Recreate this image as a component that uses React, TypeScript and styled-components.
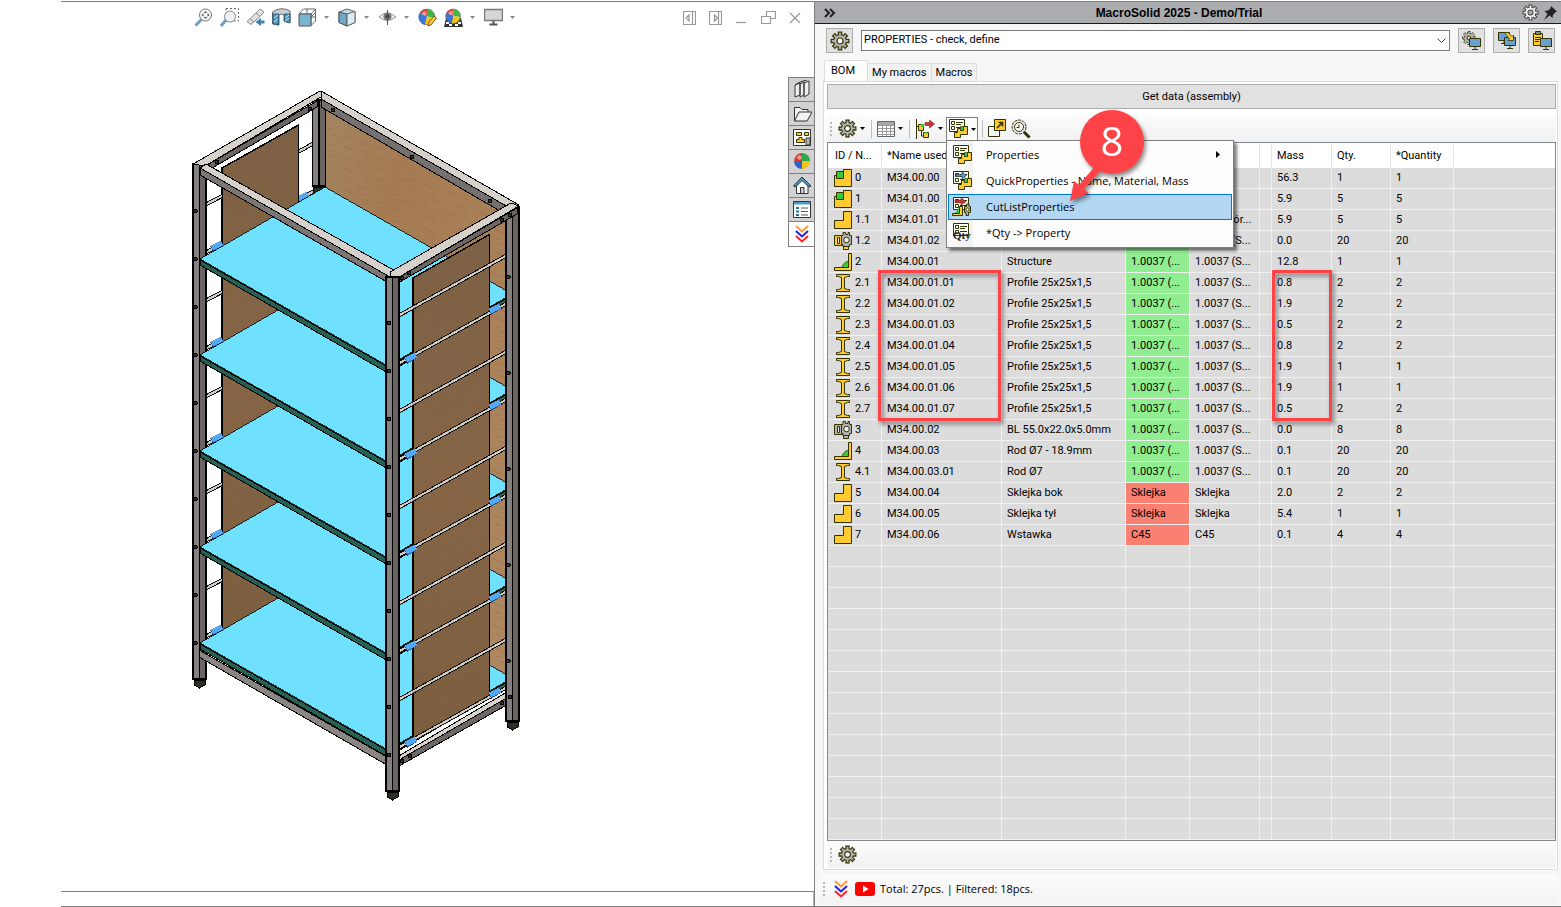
import React from "react";
import styled, { createGlobalStyle, css } from "styled-components";

const GlobalStyle = createGlobalStyle`
  * { box-sizing: border-box; }
  html, body { margin: 0; padding: 0; background: #fff; }
  button, select { font: inherit; color: inherit; margin: 0; padding: 0; }
  svg { display: block; flex: none; }
`;

const uiFont = `"Open Sans", "Segoe UI", sans-serif`;
const gridFont = `Roboto, "Liberation Sans", sans-serif`;
const titleFont = `"Liberation Sans", Arial, sans-serif`;
const INK = "#333300";
const GOLD = "#ffcb31";
const GREEN = "#33cc33";
const GREY = "#b3b3b3";
const BLUE = "#5b9bd5";
const RED = "#cc3333";

/* ---------- layout ---------- */

const Shell = styled.div`
  display: grid;
  grid-template-columns: minmax(0, 1fr) 747px;
  min-height: 100vh;
  background: #fff;
  color: #000;
  font: 11px/16px ${gridFont};
`;

const Viewport = styled.main`
  display: flex;
  flex-direction: column;
  margin: 1px 0 0 61px;
  border-top: 1px solid #808080;
  border-bottom: 1px solid #808080;
`;

const ViewBar = styled.header`
  display: flex;
  justify-content: space-between;
  align-items: center;
  height: 31px;
  padding: 0 12px 0 133px;
`;

const IconRun = styled.div<{ $gap: number }>`
  display: flex;
  align-items: center;
  gap: ${(p) => p.$gap}px;
`;

const CaretSlot = styled.span`
  margin-right: 2px;
`;

const PlainButton = styled.button`
  display: flex;
  align-items: center;
  background: none;
  border: 0;
`;

const Stage = styled.div`
  display: flex;
  flex: 1;
  justify-content: space-between;
  align-items: flex-start;
  padding: 44px 0 0 119px;
`;

const TaskTabs = styled.nav`
  display: flex;
  flex-direction: column;
  width: 26px;
  border: 1px solid #808080;
  border-right: 0;
`;

const TaskTab = styled.button<{ $active?: boolean }>`
  display: flex;
  align-items: center;
  justify-content: center;
  height: 24px;
  border: 0;
  border-bottom: ${(p) => (p.$active ? "0" : "1px solid #808080")};
  background: ${(p) => (p.$active ? "#fff" : "#d2d2d2")};
`;

const ViewFooter = styled.div`
  height: 15px;
  border-top: 1px solid #808080;
  border-right: 1px solid #a0b4b4;
`;

const Panel = styled.aside`
  display: flex;
  flex-direction: column;
  margin-top: 1px;
  border: 1px solid #808080;
  border-right: 0;
  background: #f7f7f7;
`;

const TitleBar = styled.header`
  display: flex;
  align-items: center;
  justify-content: space-between;
  height: 22px;
  padding: 0 4px 0 9px;
  background: #abacb0;
  border-bottom: 1px solid #1a1a1a;
`;

const Title = styled.h1`
  margin: 0;
  font: bold 12px/16px ${titleFont};
`;

const MacroRow = styled.div`
  display: flex;
  align-items: center;
  gap: 8px;
  padding: 4px 6px 0 11px;
`;

const SquareButton = styled.button`
  display: flex;
  align-items: center;
  justify-content: center;
  width: 27px;
  height: 25px;
  border: 1px solid #adadad;
  background: #e1e1e1;
`;

const SelectWrap = styled.div`
  position: relative;
  flex: 1;
  min-width: 0;
  & > svg { position: absolute; right: 4px; top: 8px; pointer-events: none; }
`;

const MacroSelect = styled.select`
  appearance: none;
  display: block;
  width: 100%;
  height: 21px;
  padding: 0 20px 2px 2px;
  border: 1px solid #7a7a7a;
  border-radius: 0;
  background: #fff;
`;

const TabRow = styled.div`
  display: flex;
  align-items: flex-end;
  padding: 7px 0 0 9px;
`;

const TabButton = styled.button<{ $active?: boolean }>`
  height: ${(p) => (p.$active ? 21 : 18)}px;
  padding: 0 ${(p) => (p.$active ? 12 : 4)}px 0 ${(p) => (p.$active ? 6 : 4)}px;
  border: 1px solid #dcdcdc;
  border-bottom: 0;
  background: ${(p) => (p.$active ? "#fff" : "#f2f2f2")};
  & + & { border-left: 0; }
`;

const TabPage = styled.section`
  display: flex;
  flex: 1;
  flex-direction: column;
  margin: 0 3px 0 8px;
  padding: 2px 1px 1px 3px;
  border: 1px solid #dcdcdc;
  background: #fff;
`;

const GetDataButton = styled.button`
  height: 25px;
  border: 1px solid #adadad;
  background: #e1e1e1;
`;

const ToolStrip = styled.div<{ $spaced?: boolean }>`
  display: flex;
  align-items: center;
  height: 27px;
  margin-top: ${(p) => (p.$spaced ? 6 : 0)}px;
  padding-left: 3px;
  border-radius: 3px;
  background: linear-gradient(#fcfcfc, #f1f1f1);
`;

const Grip = styled.span`
  width: 2px;
  height: 14px;
  margin-right: 4px;
  background: repeating-linear-gradient(#b8b8b8 0 2px, transparent 2px 4px);
`;

const Divider = styled.span`
  width: 1px;
  height: 18px;
  margin: 0 3px 0 4px;
  background: #bdbdbd;
`;

const ToolButton = styled.button<{ $open?: boolean }>`
  display: flex;
  align-items: center;
  gap: 3px;
  height: 24px;
  padding: 0 1px;
  border: 1px solid transparent;
  background: none;
  ${(p) =>
    p.$open &&
    css`
      border-color: #808080;
      border-bottom: 0;
      background: #fcfcfc;
    `}
`;

const MenuAnchor = styled.div`
  position: relative;
  display: flex;
  margin-left: 1px;
`;

const Menu = styled.div`
  position: absolute;
  z-index: 3;
  left: 0;
  top: 23px;
  width: 288px;
  padding: 1px;
  border: 1px solid #808080;
  background: linear-gradient(to right, #fcfcfc, #f1f1f1 26px, #fdfdfd 26px);
  box-shadow: 3px 3px 3px rgba(0, 0, 0, 0.5);
`;

const MenuItem = styled.button<{ $hot?: boolean }>`
  display: flex;
  align-items: center;
  gap: 14px;
  width: 100%;
  height: 26px;
  padding: 0 11px 0 3px;
  border: 1px solid ${(p) => (p.$hot ? "#0078d7" : "transparent")};
  background: ${(p) => (p.$hot ? "#b3d7f3" : "none")};
  font: 11px/16px ${uiFont};
  text-align: left;
  & > span { flex: 1; white-space: nowrap; }
`;

const Callout = styled.svg`
  position: absolute;
  z-index: 4;
  left: 114px;
  top: -12px;
  pointer-events: none;
  filter: drop-shadow(2px 3px 2px rgba(0, 0, 0, 0.45));
`;

const GridFrame = styled.div`
  position: relative;
  flex: 1;
  border: 1px solid #828790;
  background: #dcdcdc;
`;

const Grid = styled.table`
  width: 100%;
  table-layout: fixed;
  border-collapse: separate;
  border-spacing: 0;
`;

const HeadCell = styled.th`
  height: 25px;
  padding: 0 5px;
  border-right: 1px solid #e5e5e5;
  background: #fff;
  font-weight: normal;
  text-align: left;
  white-space: nowrap;
  &:first-child { padding-left: 7px; }
  &:last-child { border-right: 0; }
`;

const tones = { ok: "#90ee90", bad: "#fa8072", none: "transparent" };

const Cell = styled.td<{ $tone?: keyof typeof tones }>`
  height: 21px;
  padding: 0 5px;
  border-right: 1px solid #f0f0f0;
  border-bottom: 1px solid #f0f0f0;
  background: ${(p) => tones[p.$tone ?? "none"]};
  overflow: hidden;
  white-space: nowrap;
  &:last-child { border-right: 0; }
`;

const IdBox = styled.div`
  display: flex;
  align-items: center;
  gap: 3px;
  margin-left: 1px;
`;

const Marker = styled.div<{ $left: number; $width: number }>`
  position: absolute;
  z-index: 2;
  left: ${(p) => p.$left}px;
  top: 127px;
  width: ${(p) => p.$width}px;
  height: 151px;
  border: 3px solid #fd4347;
  filter: drop-shadow(2px 3px 2px rgba(0, 0, 0, 0.5));
`;

const StatusBar = styled.footer`
  display: flex;
  align-items: center;
  height: 28px;
  margin: 5px 3px 3px 5px;
  padding-left: 3px;
  border-radius: 3px;
  background: linear-gradient(#fcfcfc, #f3f3f3);
  font: 11px/16px ${uiFont};
`;

const StatusIcons = styled.div`
  display: flex;
  align-items: center;
  gap: 6px;
  margin: 0 5px 0 4px;
`;

/* ---------- icons ---------- */

const gearPath = (cx: number, cy: number, ro: number, ri: number) => {
  const pts: string[] = [];
  for (let i = 0; i < 8; i++) {
    const a = (i * Math.PI) / 4;
    [
      [-0.24, ri],
      [-0.19, ro],
      [0.19, ro],
      [0.24, ri],
    ].forEach(([d, r]) => pts.push(`${(cx + r * Math.cos(a + d)).toFixed(2)} ${(cy + r * Math.sin(a + d)).toFixed(2)}`));
  }
  return `M${pts.join("L")}Z`;
};

const Gear = ({ size = 20, fill = GREY, ink = INK, hole = "#fff" }) => (
  <svg width={size} height={size} viewBox="0 0 20 20">
    <path d={gearPath(10, 10, 9, 6.4)} fill={fill} stroke={ink} strokeWidth="1.2" />
    <circle cx="10" cy="10" r="3" fill={hole} stroke={ink} strokeWidth="1.2" />
  </svg>
);

const Caret = ({ color = "#000" }) => (
  <svg width="5" height="3" viewBox="0 0 5 3">
    <path d="M0 0H5L2.5 3Z" fill={color} />
  </svg>
);

const Monitor = ({ x, y }: { x: number; y: number }) => (
  <g transform={`translate(${x} ${y})`} stroke={INK}>
    <path d="M.5 .5H11.5V8.5H.5Z" fill="#6aa0d0" />
    <path d="M6 9V11M3 11.5H9" fill="none" />
  </g>
);

const GearMonitor = () => (
  <svg width="20" height="20" viewBox="0 0 20 20">
    <path d={gearPath(7, 7, 6.6, 4.8)} fill={GREY} stroke={INK} strokeDasharray="2 1" />
    <circle cx="7" cy="7" r="2" fill="#e1e1e1" stroke={INK} />
    <Monitor x={7} y={7} />
  </svg>
);
const SwapMonitor = () => (
  <svg width="20" height="20" viewBox="0 0 20 20">
    <Monitor x={1} y={1} />
    <Monitor x={7} y={6} />
    <path d="M7.500 1.500H11L15 5.500L16.500 4V9.500H11L12.500 8Z" fill={GOLD} stroke={INK} strokeWidth=".8" />
  </svg>
);
const ClipMonitor = () => (
  <svg width="20" height="20" viewBox="0 0 20 20">
    <path d="M1.500 2.500H10.500V14.500H1.500Z" fill={GOLD} stroke={INK} />
    <path d="M3.500 .5H8.500V3.500H3.500Z" fill="#888" stroke={INK} />
    <path d="M3 6.500H9M3 8.500H9M3 10.500H7" stroke={INK} />
    <Monitor x={8} y={7} />
  </svg>
);

const Chevrons = () => (
  <svg width="16" height="20" viewBox="0 0 16 20" fill="none" strokeWidth="2">
    <path d="M2 2L8 7.500L14 2" stroke="#ff9933" />
    <path d="M2 7L8 12.500L14 7" stroke="#2222dd" />
    <path d="M2 12L8 17.500L14 12" stroke="#ff2222" />
  </svg>
);

const YouTube = () => (
  <svg width="20" height="14" viewBox="0 0 20 14">
    <rect width="20" height="14" rx="3" fill="#f00" />
    <path d="M8 3.500L13.500 7L8 10.500Z" fill="#fff" />
  </svg>
);

const TableIcon = () => (
  <svg width="18" height="16" viewBox="0 0 18 16">
    <path d="M.5 .5H17.500V15.500H.5Z" fill="#fff" stroke="#666" />
    <path d="M1 1H17V4H1Z" fill="#a8a8a8" />
    <path d="M1 4.500H17M1 7.500H17M1 10.500H17M1 13.500H17M5.500 4V15M9.500 4V15M13.500 4V15" stroke="#999" />
  </svg>
);

const TreeIcon = () => (
  <svg width="20" height="20" viewBox="0 0 20 20">
    <path d="M1.500 0V20M2 7.500H5M9 17H6.500V12" fill="none" stroke={INK} />
    <path d="M3.500 5.500H8.500V11.500H3.500ZM8.500 13.500H13.500V18.500H8.500Z" fill={GOLD} stroke={INK} />
    <path d="M6 5H9V8H6ZM10 13H12V15H10Z" fill={GREEN} />
    <path d="M10 3.500H14.500V1L19.500 5L14.500 9V6.500H10Z" fill={RED} stroke="#802020" strokeWidth=".6" />
  </svg>
);

const Sheet = () => (
  <g>
    <path d="M1.500 .5H16.500V12.500H1.500Z" fill="#fff" stroke={INK} />
    <path d="M3.500 2.500H6.500V5.500H3.500ZM3.500 7.500H6.500V10.500H3.500Z" fill="#fff" stroke={INK} />
    <path d="M8 3.500H15M8 5.500H13M8 8.500H15" stroke={INK} />
  </g>
);
const SheetParts = () => (
  <g>
    <path d="M15.500 7.500H19.500V15.500H12.500V18.500H6.500V13.500H9.500V9.500H12.500V11.500H15.500Z" fill={GOLD} stroke={INK} />
    <path d="M12.500 7.500H15.500V11.500H12.500Z" fill={GREEN} stroke={INK} strokeWidth=".6" />
  </g>
);
const PropsIcon = ({ arrow }: { arrow?: boolean }) => (
  <svg width="20" height="20" viewBox="0 0 20 20">
    <Sheet />
    {arrow && <path d="M4 3.500H10V1L14.500 4.500L10 8V5.500H4Z" fill={BLUE} stroke="#234" strokeWidth=".7" />}
    <SheetParts />
  </svg>
);
const CutListIcon = () => (
  <svg width="20" height="20" viewBox="0 0 20 20">
    <Sheet />
    <path d="M3 3H9V.8L14 4.500L9 8V5.800H3Z" fill={RED} stroke="#702020" strokeWidth=".6" />
    <path d="M7.500 9.500H10.500V18.500H.5V16.500H7.500Z" fill={GOLD} stroke={INK} />
    <path d="M7 11V16H3Z" fill={GREEN} />
    <path d="M12.500 9.500H14.500V7H17V9.500H18.500V15.500H16.500V18.500H14V15.500H12.500Z" fill={GREY} stroke={INK} />
    <circle cx="15.500" cy="12.500" r="1.600" fill="#fff" stroke={INK} />
  </svg>
);
const QtyIcon = () => (
  <svg width="20" height="20" viewBox="0 0 20 20">
    <Sheet />
    <text x="1" y="16" fontFamily="Liberation Serif" fontSize="11" fontWeight="bold" fill="#222">
      Qty
    </text>
  </svg>
);
const ExpandIcon = () => (
  <svg width="19" height="19" viewBox="0 0 19 19">
    <path d="M.5 7.500H11.500V17.500H.5Z" fill="#f4f4f4" stroke={INK} />
    <path d="M6.500 .5H17.500V11.500H6.500Z" fill={GOLD} stroke={INK} />
    <path d="M9 9L14 4M10.500 3.500H14.500V7.500" fill="none" stroke={INK} strokeWidth="1.600" />
  </svg>
);
const SearchIcon = () => (
  <svg width="20" height="20" viewBox="0 0 20 20" fill="none" stroke={INK}>
    <circle cx="8" cy="8" r="7" fill="#e9e9e9" strokeDasharray="3 1" />
    <circle cx="8" cy="8" r="4.500" fill="#fff" />
    <path d="M8 5.500V8.500H5.500" />
    <path d="M13 13L18.500 18.500" strokeWidth="3" />
  </svg>
);

type Kind = "asm" | "part" | "bolt" | "boltGrey" | "weld" | "beam";
const KindIcon = ({ kind }: { kind: Kind }) => (
  <svg width="18" height="18" viewBox="0 0 18 18" stroke={INK}>
    {kind === "part" && <path d="M9.500 .5H17.500V17.500H.5V9.500H9.500Z" fill={GOLD} />}
    {kind === "asm" && (
      <>
        <path d="M9.500 .5H17.500V17.500H.5V6.500H9.500Z" fill={GOLD} />
        <path d="M2.500 2.500H9.500V9.500H2.500Z" fill={GREEN} />
      </>
    )}
    {(kind === "bolt" || kind === "boltGrey") && (
      <>
        <path d="M.5 3.500H8.500V13.500H.5ZM9.500 13H14.500V17.500H9.500Z" fill={kind === "bolt" ? GOLD : GREY} />
        <path d="M3.500 5.500H5.500V11.500H3.500Z" fill="#e8e8e8" />
        <path d="M7.500 3.500H9V.5H11.500V2.500H14V.5H15.500V3.500H17.500V12.500H15.500V14.500H9V12.500H7.500Z" fill={GREY} />
        <circle cx="12.500" cy="8" r="2.800" fill="#eee" />
      </>
    )}
    {kind === "weld" && (
      <>
        <path d="M14.500 8V14.500H8Q9 9.500 14.500 8Z" fill={GREEN} strokeWidth=".7" />
        <path d="M14.500 .5H17.500V17.500H.5V14.500H14.500Z" fill={GOLD} />
      </>
    )}
    {kind === "beam" && (
      <path d="M2.500 .5H15.500V2.500H13.500L10.500 3.500V14.500L13.500 15.500H15.500V17.500H2.500V15.500H4.500L7.500 14.500V3.500L4.500 2.500H2.500Z" fill={GOLD} />
    )}
  </svg>
);

const Ball = () => (
  <g>
    <path d="M9 8.500L1.500 5A8 8 0 0 1 9 1Z" fill="#e8473b" />
    <path d="M9 8.500V1A8 8 0 0 1 16.800 10Z" fill="#3db54a" />
    <path d="M9 8.500L16.800 10A8 8 0 0 1 7 16.700Z" fill="#f5c518" />
    <path d="M9 8.500L7 16.700A8 8 0 0 1 1.500 5Z" fill="#3a75d8" />
    <circle cx="9" cy="9" r="7.900" fill="none" stroke="#666" strokeWidth=".7" />
    <circle cx="6.500" cy="5.500" r="2" fill="#fff" opacity=".45" />
  </g>
);
const BallTask = () => (
  <g>
    <path d="M9 9L3 4A8 8 0 0 1 10 1Z" fill="#e8473b" />
    <path d="M9 9L1.200 9A8 8 0 0 1 9 1V9Z" fill="#d93a2e" />
    <path d="M9 9V1A8 8 0 0 1 17 9Z" fill="#2fa84a" />
    <path d="M9 9H17A8 8 0 0 1 9 17Z" fill="#f2c21c" />
    <path d="M9 9V17A8 8 0 0 1 1 9Z" fill="#2f63c8" />
    <circle cx="6.500" cy="5.500" r="2.200" fill="#fff" opacity=".5" />
  </g>
);

const viewIcons = {
  fit: (
    <>
      <path d="M1.500 17.500L7.500 11.500" stroke="#6f9fc0" strokeWidth="3" />
      <circle cx="11.500" cy="7" r="6" fill="#f4f6f8" stroke="#777" />
      <path d="M11.500 3L9.800 5H13.200ZM11.500 11L9.800 9H13.200ZM7.500 7L9.500 5.300V8.700ZM15.500 7L13.500 5.300V8.700Z" fill="#555" />
    </>
  ),
  area: (
    <>
      <path d="M6 .5H18.500V13H6Z" fill="none" stroke="#666" strokeDasharray="2 2" />
      <path d="M1 18L6 12" stroke="#6f9fc0" strokeWidth="3" />
      <circle cx="10" cy="8.500" r="5.500" fill="#eef2f5" stroke="#888" />
    </>
  ),
  prev: (
    <>
      <path d="M1 13.500L10 5L14 1L18 4L14.500 8L5 16.500Z" fill="#e2e2e2" stroke="#888" />
      <path d="M10 5L14 8.500M4 11L8 14" stroke="#888" />
      <path d="M18.500 14H14" stroke="#3f83ab" strokeWidth="3" />
      <path d="M15 10L9.500 14L15 18Z" fill="#3f83ab" />
    </>
  ),
  section: (
    <>
      <path d="M.5 4Q9 -2 18 3V14L12 13V7Q9 5 7 7V17L.5 16Z" fill="#c9ced2" stroke="#666" />
      <path d="M1 6H6.500V17L1 15.500ZM12.500 6H18V15L12.500 13.500Z" fill="#4e93b8" stroke="#2a5f7e" />
      <path d="M2 10L6 7M2 14L6 11M13 10L17 7M13 13L17 10" stroke="#cfe6f2" />
    </>
  ),
  cube: (
    <>
      <path d="M5.500 1H17.500V13L13 17.500V6H1L5.500 1ZM13 6L17.500 1M9 1V5M13 9H17M17 5L13 9" fill="#fff" stroke="#666" />
      <path d="M1 6H13V18H1Z" fill="#7ab6d2" stroke="#555" />
    </>
  ),
  shade: (
    <>
      <path d="M1 4L9 1L17 3.500V14.500L9 18L1 14.500Z" fill="#b9dcea" stroke="#666" />
      <path d="M9 6V18L1 14.500V4Z" fill="#6ba9c6" stroke="#555" />
      <path d="M9 6L17 3.500V14.500L9 18Z" fill="#dcecf3" stroke="#666" />
    </>
  ),
  eye: (
    <>
      <path d="M1 9Q9 1 18 9Q9 16 1 9Z" fill="#ededed" stroke="#999" />
      <circle cx="9.500" cy="8.500" r="4" fill="#777" />
      <circle cx="9.500" cy="8.500" r="1.800" fill="#333" />
      <path d="M9.500 2V17" stroke="#555" />
    </>
  ),
  paint: (
    <>
      <Ball />
      <path d="M10 18L11 14L16 8L18.500 10L13 17Z" fill="#f4c84a" stroke="#8a5a10" />
    </>
  ),
  scene: (
    <>
      <path d="M2 10H17L19 19H0Z" fill="#333" />
      <path d="M2 14H5V16H2ZM14 14H17V16H14ZM5 16H8V18H5ZM11 16H14V18H11Z" fill="#fff" />
      <g transform="translate(1 0) scale(.92)">
        <Ball />
      </g>
    </>
  ),
  screen: (
    <>
      <path d="M.5 1.500H18.500V12.500H.5Z" fill="#d6d6d6" stroke="#777" strokeWidth="1.400" />
      <path d="M9.500 13V16M5.500 16.500H13.500" stroke="#555" strokeWidth="2" />
    </>
  ),
};

const Glyph = ({ name }: { name: keyof typeof viewIcons }) => (
  <svg width="19" height="19" viewBox="0 0 19 19" fill="none">
    {viewIcons[name]}
  </svg>
);

const windowGlyphs: [string, string][] = [
  ["Dock left", "M.5 2.500H12.500V15.500H.5ZM9.500 3V15M6 6V12L3 9Z"],
  ["Dock right", "M.5 2.500H12.500V15.500H.5ZM9.500 3V15M5.500 6V12L8.500 9Z"],
  ["Minimize", "M1 13.500H11"],
  ["Restore", "M5.500 7V2.500H14.500V9.500H10M.5 7.500H9.500V14.500H.5Z"],
  ["Close", "M1 4L11 14M11 4L1 14"],
];

const taskGlyphs: [string, React.ReactNode][] = [
  ["Design library", <path key="a" d="M2 5L7 3V15L2 17ZM7 4L11 2V15L7 17ZM11 3L16 1V14L11 17ZM2 5L5 3M5 3L10 1M10 1L14 0" fill="#eee" stroke="#333" />],
  ["File explorer", <path key="b" d="M1.500 17V3.500H7L9 5.500H15V8M1.500 17L6 8H19L14 17Z" fill="#f2f2f2" stroke="#333" />],
  [
    "View palette",
    <g key="c">
      <path d="M.5 1.500H17.500V17.500H.5Z" fill="#fff" stroke="#333" />
      <path d="M3.500 4.500H8.500V7.500H3.500ZM11.500 4.500H15.500V7.500H11.500ZM3.500 11.500H6V9.500H9V11.500H11.500V14.500H3.500Z" fill={GOLD} stroke={INK} />
      <path d="M13 10H17V17H13Z" fill="#bbb" stroke="#333" />
    </g>,
  ],
  ["Appearances", <BallTask key="d" />],
  [
    "Home",
    <g key="e">
      <path d="M3.500 9V17.500H15V9L9 3Z" fill="#fff" stroke="#333" />
      <path d="M.5 10L9 1L18 10L16 11L9 4.500L2.500 11Z" fill="#4f9cc0" stroke="#234" />
      <path d="M7.500 17V11.500H11V17" fill="#ccc" stroke="#333" />
    </g>,
  ],
  [
    "Custom properties",
    <g key="f">
      <path d="M.5 1.500H17.500V17.500H.5Z" fill="#fff" stroke="#333" />
      <path d="M1 2H17V4.500H1Z" fill="#4f9cc0" />
      <path d="M3 7H6V9H3ZM3 10.500H6V12.500H3ZM3 14H6V16H3Z" fill="#2a6f95" />
      <path d="M8 8H15M8 11.500H15M8 15H15" stroke="#555" />
    </g>,
  ],
];

/* ---------- rack drawing ---------- */

const pts = (a: number[][], dy = 0) => a.map(([x, y]) => `${x},${y + dy}`).join(" ");
const range = (n: number) => Array.from({ length: n }, (_, i) => i);

const Rod = ({ a }: { a: [number, number, number, number] }) => (
  <g>
    <path d={`M${a[0]} ${a[1]}L${a[2]} ${a[3]}`} stroke="#111" strokeWidth="4" />
    <path d={`M${a[0]} ${a[1]}L${a[2]} ${a[3]}`} stroke="#cfcbc6" strokeWidth="2" />
  </g>
);
const Clip = ({ x, y }: { x: number; y: number }) => (
  <g>
    <path d={`M${x - 5} ${y + 3}L${x + 5} ${y - 3}`} stroke="#1d4a80" strokeWidth="6" />
    <path d={`M${x - 5} ${y + 2}L${x + 5} ${y - 3}`} stroke="#55a8f5" strokeWidth="5" />
  </g>
);
const Post = ({ x, top, bottom }: { x: number; top: number; bottom: number }) => (
  <g stroke="#000">
    <path d={`M${x} ${top}H${x + 6.500}V${bottom}H${x}Z`} fill="#858181" strokeWidth="1.500" />
    <path d={`M${x + 6.500} ${top}H${x + 13}V${bottom}H${x + 6.500}Z`} fill="#6a6563" strokeWidth="1.500" />
    <path d={`M${x + 1} ${bottom + 1}H${x + 12}V${bottom + 6}L${x + 6.500} ${bottom + 9}L${x + 1} ${bottom + 6}Z`} fill="#2e2f24" />
  </g>
);
const Hole = ({ x, y }: { x: number; y: number }) => <circle cx={x} cy={y} r="1.700" fill="#333" stroke="#000" />;

const Rack = () => (
  <svg width="350" height="730" viewBox="180 77 350 730" shapeRendering="crispEdges" role="img" aria-label="Rack assembly">
    <defs>
      <linearGradient id="woodLight" x1="0" y1="0" x2="1" y2="1">
        <stop offset="0" stopColor="#a38462" />
        <stop offset=".25" stopColor="#a57b53" />
        <stop offset="1" stopColor="#ad8860" />
      </linearGradient>
      <linearGradient id="woodDark" x1="0" y1="0" x2="0" y2="1">
        <stop offset="0" stopColor="#7c6045" />
        <stop offset=".5" stopColor="#866547" />
        <stop offset="1" stopColor="#7b5d40" />
      </linearGradient>
      <pattern id="grainA" width="34" height="22" patternUnits="userSpaceOnUse">
        <path d="M2 3L9 6M16 8L26 13M4 14L12 18M24 1L32 5M20 18L25 20" stroke="#94653a" strokeWidth=".8" opacity=".6" />
      </pattern>
      <pattern id="grainB" width="30" height="20" patternUnits="userSpaceOnUse">
        <path d="M2 6L9 3M15 12L24 8M4 18L10 15M22 3L28 1M20 19L25 17" stroke="#966a34" strokeWidth=".8" opacity=".6" />
      </pattern>
    </defs>

    {["url(#woodLight)", "url(#grainA)"].map((f) => (
      <polygon key={f} points="325,106 507,211 507,692 325,590" fill={f} stroke="#000" />
    ))}
    <Rod a={[298, 152, 316, 142]} />
    <Rod a={[298, 200, 316, 190]} />
    <Clip x={303} y={197} />
    <Post x={312.500} top={100} bottom={186} />
    {["url(#woodDark)", "url(#grainB)"].map((f) => (
      <polygon key={f} points="222,168 298.500,125 298.500,590 222,631" fill={f} stroke="#000" strokeWidth="1.500" />
    ))}
    {range(10).map((i) => (
      <g key={i}>
        <Rod a={[205, 205 + 48 * i, 222, 196 + 48 * i]} />
        {i % 2 === 1 && <Clip x={217} y={198 + 48 * i} />}
      </g>
    ))}
    <Post x={193} top={164} bottom={679} />

    <polygon points="199,650 387,757 387,765 199,657" fill="#8b8683" stroke="#000" />
    <polygon points="392,760 512,689 512,697 392,767" fill="#d8d3cd" stroke="#000" />
    <polygon points="392,764 512,695 512,702 392,770" fill="#6d6865" stroke="#000" />

    {range(5).map((i) => {
      const dy = 96 * (4 - i);
      return (
        <g key={i} stroke="#000">
          <polygon points={pts([[200, 260], [388, 367], [512, 295], [512, 300], [388, 373], [200, 265]], dy)} fill="#266154" />
          <polygon points={pts([[200, 259], [325, 187], [512, 294], [388, 366]], dy)} fill="#70e0ff" strokeWidth=".8" />
        </g>
      );
    })}

    {["url(#woodDark)", "url(#grainB)"].map((f) => (
      <polygon key={f} points="413,278 489.500,234.500 489.500,697 413,740" fill={f} stroke="#000" strokeWidth="1.500" />
    ))}
    <polygon points="193,164 320,91 326,94 205,166" fill="#d6d1cb" stroke="#000" />
    <polygon points="207,165 317,101 317,107 207,171" fill="#6b6663" stroke="#000" />
    <polygon points="321,91 519,205 508,207 321,99" fill="#d6d1cb" stroke="#000" />
    <polygon points="321,99 508,207 500,211 321,107" fill="#757170" stroke="#000" />
    {range(10).map((i) => (
      <g key={i}>
        <Rod a={[398, 316 + 48 * i, 511, 253 + 48 * i]} />
        {i % 2 === 1 && (
          <>
            <Clip x={411} y={310 + 48 * i} />
            <Clip x={495} y={261 + 48 * i} />
          </>
        )}
      </g>
    ))}
    <Post x={506} top={207} bottom={721} />
    <polygon points="200,168 390,277 387,282 200,175" fill="#7b7775" stroke="#000" />
    <polygon points="200,168 206,164 397,272 390,277" fill="#d6d1cb" stroke="#000" />
    <polygon points="396,279 517,208 517,214 398,283" fill="#6b6663" stroke="#000" />
    <polygon points="390,272 511,203 519,206 396,279 390,277" fill="#d6d1cb" stroke="#000" />
    <Post x={386} top={277} bottom={791} />
    {range(10).map((i) => (
      <g key={i}>
        <Hole x={195.500} y={211 + 48 * i} />
        <Hole x={389} y={323 + 48 * i} />
      </g>
    ))}
    {range(5).map((i) => (
      <Hole key={i} x={508.500} y={277 + 96 * i} />
    ))}
    {[[333, 110], [412, 157], [490, 201], [402, 278], [409, 273], [502, 220], [510, 215], [310, 109], [217, 162], [402, 761], [410, 756], [502, 703], [510, 697]].map(([x, y]) => (
      <Hole key={`${x}-${y}`} x={x} y={y} />
    ))}
  </svg>
);

/* ---------- data ---------- */

type Row = [Kind, string, string, string, "ok" | "bad" | "none", string, string, string, string];
const S = "1.0037 (...";
const S2 = "1.0037 (S...";
const profile = (n: number, mass: string, qty: string): Row => ["beam", `2.${n}`, `M34.00.01.0${n}`, "Profile 25x25x1,5", "ok", S, S2, mass, qty];
const rows: Row[] = [
  ["asm", "0", "M34.00.00", "", "none", "", "", "56.3", "1"],
  ["asm", "1", "M34.01.00", "", "none", "", "", "5.9", "5"],
  ["part", "1.1", "M34.01.01", "", "none", "", "Płyta wiór...", "5.9", "5"],
  ["bolt", "1.2", "M34.01.02", "", "ok", "", S2, "0.0", "20"],
  ["weld", "2", "M34.00.01", "Structure", "ok", S, S2, "12.8", "1"],
  profile(1, "0.8", "2"),
  profile(2, "1.9", "2"),
  profile(3, "0.5", "2"),
  profile(4, "0.8", "2"),
  profile(5, "1.9", "1"),
  profile(6, "1.9", "1"),
  profile(7, "0.5", "2"),
  ["boltGrey", "3", "M34.00.02", "BL 55.0x22.0x5.0mm", "ok", S, S2, "0.0", "8"],
  ["weld", "4", "M34.00.03", "Rod Ø7 - 18.9mm", "ok", S, S2, "0.1", "20"],
  ["beam", "4.1", "M34.00.03.01", "Rod Ø7", "ok", S, S2, "0.1", "20"],
  ["part", "5", "M34.00.04", "Sklejka bok", "bad", "Sklejka", "Sklejka", "2.0", "2"],
  ["part", "6", "M34.00.05", "Sklejka tył", "bad", "Sklejka", "Sklejka", "5.4", "1"],
  ["part", "7", "M34.00.06", "Wstawka", "bad", "C45", "C45", "0.1", "4"],
];
const heads = ["ID / N...", "*Name used", "", "", "", "", "Mass", "Qty.", "*Quantity", ""];
const widths = [54, 120, 124, 64, 70, 12, 60, 59, 63];

/* ---------- app ---------- */

const ViewCaret = () => (
  <CaretSlot>
    <Caret color="#888" />
  </CaretSlot>
);

export default function App() {
  return (
    <>
      <GlobalStyle />
      <Shell>
        <Viewport>
          <ViewBar>
            <IconRun $gap={7}>
              <PlainButton aria-label="Zoom to fit"><Glyph name="fit" /></PlainButton>
              <PlainButton aria-label="Zoom to area"><Glyph name="area" /></PlainButton>
              <PlainButton aria-label="Previous view"><Glyph name="prev" /></PlainButton>
              <PlainButton aria-label="Section view"><Glyph name="section" /></PlainButton>
              <PlainButton aria-label="View orientation"><Glyph name="cube" /></PlainButton>
              <ViewCaret />
              <PlainButton aria-label="Display style"><Glyph name="shade" /></PlainButton>
              <ViewCaret />
              <PlainButton aria-label="Hide or show items"><Glyph name="eye" /></PlainButton>
              <ViewCaret />
              <PlainButton aria-label="Edit appearance"><Glyph name="paint" /></PlainButton>
              <PlainButton aria-label="Apply scene"><Glyph name="scene" /></PlainButton>
              <ViewCaret />
              <PlainButton aria-label="View settings"><Glyph name="screen" /></PlainButton>
              <ViewCaret />
            </IconRun>
            <IconRun $gap={13}>
              {windowGlyphs.map(([label, d]) => (
                <PlainButton key={label} aria-label={label}>
                  <svg width={label === "Restore" ? 15 : 13} height="18" fill="none" stroke="#999" strokeWidth="1.200">
                    <path d={d} />
                  </svg>
                </PlainButton>
              ))}
            </IconRun>
          </ViewBar>
          <Stage>
            <Rack />
            <TaskTabs aria-label="Task pane">
              {taskGlyphs.map(([label, art]) => (
                <TaskTab key={label} aria-label={label}>
                  <svg width="20" height="19" viewBox="-1 0 20 19" fill="none">{art}</svg>
                </TaskTab>
              ))}
              <TaskTab $active aria-label="MacroSolid"><Chevrons /></TaskTab>
            </TaskTabs>
          </Stage>
          <ViewFooter />
        </Viewport>

        <Panel>
          <TitleBar>
            <PlainButton aria-label="Collapse panel">
              <svg width="12" height="10" fill="none" stroke="#222" strokeWidth="2">
                <path d="M1 1L5 5L1 9M6 1L10 5L6 9" />
              </svg>
            </PlainButton>
            <Title>MacroSolid 2025 - Demo/Trial</Title>
            <IconRun $gap={4}>
              <PlainButton aria-label="Settings"><Gear size={17} fill="#f4f4f4" ink="#444" hole="#abacb0" /></PlainButton>
              <PlainButton aria-label="Pin">
                <svg width="14" height="14" viewBox="0 0 14 14">
                  <path d="M8 0L14 5.500L12 6.500L10 9L9.500 12L6.500 9.500L1 14L4.500 8L1.500 5L5 4.500L7.500 2.500Z" fill="#222" />
                </svg>
              </PlainButton>
            </IconRun>
          </TitleBar>

          <MacroRow>
            <SquareButton aria-label="Options"><Gear /></SquareButton>
            <SelectWrap>
              <MacroSelect aria-label="Macro">
                <option>PROPERTIES - check, define</option>
              </MacroSelect>
              <svg width="9" height="6" fill="none" stroke="#444">
                <path d="M.5 .5L4.500 4.500L8.500 .5" />
              </svg>
            </SelectWrap>
            <SquareButton aria-label="Configure"><GearMonitor /></SquareButton>
            <SquareButton aria-label="Switch"><SwapMonitor /></SquareButton>
            <SquareButton aria-label="Clipboard"><ClipMonitor /></SquareButton>
          </MacroRow>

          <TabRow role="tablist">
            <TabButton role="tab" $active>BOM</TabButton>
            <TabButton role="tab">My macros</TabButton>
            <TabButton role="tab">Macros</TabButton>
          </TabRow>

          <TabPage>
            <GetDataButton>Get data (assembly)</GetDataButton>
            <ToolStrip $spaced>
              <Grip />
              <ToolButton aria-label="Settings"><Gear size={19} /><Caret /></ToolButton>
              <Divider />
              <ToolButton aria-label="Columns"><TableIcon /><Caret /></ToolButton>
              <Divider />
              <ToolButton aria-label="Structure"><TreeIcon /><Caret /></ToolButton>
              <MenuAnchor>
                <ToolButton $open aria-label="Properties menu" aria-expanded="true"><PropsIcon /><Caret /></ToolButton>
                <Menu role="menu">
                  <MenuItem role="menuitem">
                    <PropsIcon />
                    <span>Properties</span>
                    <svg width="4" height="7"><path d="M0 0L4 3.500L0 7Z" /></svg>
                  </MenuItem>
                  <MenuItem role="menuitem"><PropsIcon arrow /><span>QuickProperties - Name, Material, Mass</span></MenuItem>
                  <MenuItem role="menuitem" $hot><CutListIcon /><span>CutListProperties</span></MenuItem>
                  <MenuItem role="menuitem"><QtyIcon /><span>*Qty -&gt; Property</span></MenuItem>
                </Menu>
                <Callout width="92" height="100" viewBox="0 0 92 100">
                  <circle cx="52" cy="37" r="32" fill="#fd4347" />
                  <path d="M36 60L19 80L14 76L10 96L29 88L24 84L42 64Z" fill="#fd4347" />
                  <text x="52" y="51" textAnchor="middle" fill="#fff" fontFamily="Open Sans, sans-serif" fontSize="40">8</text>
                </Callout>
              </MenuAnchor>
              <Divider />
              <ToolButton aria-label="Open in window"><ExpandIcon /></ToolButton>
              <ToolButton aria-label="Find"><SearchIcon /></ToolButton>
            </ToolStrip>

            <GridFrame>
              <Grid>
                <colgroup>
                  {widths.map((w, i) => (
                    <col key={i} width={w} />
                  ))}
                  <col />
                </colgroup>
                <thead>
                  <tr>
                    {heads.map((h, i) => (
                      <HeadCell key={i}>{h}</HeadCell>
                    ))}
                  </tr>
                </thead>
                <tbody>
                  {rows.map(([kind, id, name, title, tone, matA, matB, mass, qty]) => (
                    <tr key={id}>
                      <Cell><IdBox><KindIcon kind={kind} />{id}</IdBox></Cell>
                      <Cell>{name}</Cell>
                      <Cell>{title}</Cell>
                      <Cell $tone={tone}>{matA}</Cell>
                      <Cell>{matB}</Cell>
                      <Cell />
                      <Cell>{mass}</Cell>
                      <Cell>{qty}</Cell>
                      <Cell>{qty}</Cell>
                      <Cell />
                    </tr>
                  ))}
                  {range(14).map((i) => (
                    <tr key={`blank-${i}`}>
                      {heads.map((_, c) => (
                        <Cell key={c} />
                      ))}
                    </tr>
                  ))}
                </tbody>
              </Grid>
              <Marker $left={50} $width={123} />
              <Marker $left={444} $width={60} />
            </GridFrame>

            <ToolStrip>
              <Grip />
              <ToolButton aria-label="Table settings"><Gear size={19} /></ToolButton>
            </ToolStrip>
          </TabPage>

          <StatusBar>
            <Grip />
            <StatusIcons>
              <Chevrons />
              <YouTube />
            </StatusIcons>
            Total: 27pcs. | Filtered: 18pcs.
          </StatusBar>
        </Panel>
      </Shell>
    </>
  );
}
